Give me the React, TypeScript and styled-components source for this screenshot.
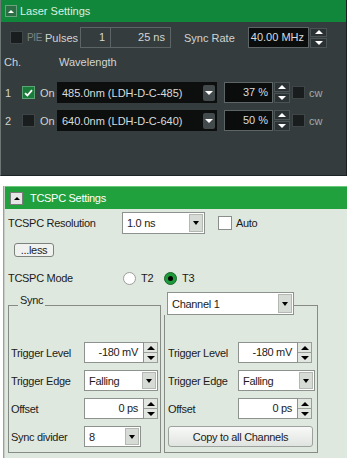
import React from "react";
import styled, { createGlobalStyle } from "styled-components";

const GlobalStyle = createGlobalStyle`
  html, body { margin: 0; padding: 0; background: #ffffff; }
  body { font-family: "Liberation Sans", Arial, sans-serif; font-size: 11px; }
  * { box-sizing: border-box; }
`;

const Page = styled.div`
  width: 347px;
  height: 458px;
  overflow: hidden;
  display: flex;
  flex-direction: column;
`;

/* small triangle glyph used by arrows and spinners */
const Tri = styled.span<{ $dir: "up" | "down"; $color: string; $w?: number; $h?: number }>`
  display: block;
  width: 0;
  height: 0;
  border-left: ${p => p.$w ?? 4}px solid transparent;
  border-right: ${p => p.$w ?? 4}px solid transparent;
  ${p =>
    p.$dir === "up"
      ? `border-bottom: ${p.$h ?? 4}px solid ${p.$color};`
      : `border-top: ${p.$h ?? 4}px solid ${p.$color};`}
`;

/* ---------- Laser settings (dark panel) ---------- */
const LaserPanel = styled.section`
  height: 176px;
  background: #353c3d;
  border-left: 1px solid #6e7676;
  border-right: 1px solid #1b2021;
  border-bottom: 1px solid #1e2324;
  color: #d2d6d6;
`;

const DarkHeader = styled.div`
  height: 22px;
  display: flex;
  align-items: center;
  padding-left: 4px;
  background: #10873a;
`;

const DarkCollapse = styled.div`
  width: 12px;
  height: 12px;
  display: flex;
  align-items: center;
  justify-content: center;
  background: #2c6f45;
  border: 1px solid #6aa47f;
`;

const DarkTitle = styled.span`
  margin-left: 3px;
  color: #dcefe0;
`;

const DarkRow = styled.div<{ $top: number; $left: number }>`
  display: flex;
  align-items: center;
  height: 21px;
  margin-top: ${p => p.$top}px;
  padding-left: ${p => p.$left}px;
`;

const DarkLabel = styled.span<{ $w?: number; $ml?: number; $tone?: "dim" | "soft" }>`
  flex: none;
  width: ${p => (p.$w ? `${p.$w}px` : "auto")};
  margin-left: ${p => p.$ml ?? 0}px;
  color: ${p => (p.$tone === "dim" ? "#7b8383" : p.$tone === "soft" ? "#a3aaaa" : "#d0d4d4")};
  font-size: ${p => (p.$tone === "dim" ? "10px" : "11px")};
  letter-spacing: ${p => (p.$tone === "dim" ? "-0.4px" : "0")};
  white-space: nowrap;
`;

const DarkCheck = styled.span<{ $checked?: boolean; $ml?: number }>`
  flex: none;
  width: 13px;
  height: 13px;
  margin-left: ${p => p.$ml ?? 0}px;
  display: flex;
  align-items: center;
  justify-content: center;
  background: ${p => (p.$checked ? "#1b7b3b" : "#191d1e")};
  border: 1px solid ${p => (p.$checked ? "#5aa574" : "#3f4647")};
`;

const FrameBox = styled.div<{ $w: number; $ml?: number }>`
  flex: none;
  width: ${p => p.$w}px;
  height: 21px;
  margin-left: ${p => p.$ml ?? 0}px;
  border: 1px solid #5c6465;
  text-align: right;
  padding-right: 5px;
  line-height: 19px;
`;

const BlackInput = styled.div<{ $w: number; $ml?: number }>`
  flex: none;
  width: ${p => p.$w}px;
  height: 21px;
  margin-left: ${p => p.$ml ?? 0}px;
  background: #0b0d0d;
  border: 1px solid #5d6566;
  color: #d8dcdc;
  text-align: right;
  padding-right: 4px;
  line-height: 19px;
`;

const DarkSpin = styled.div<{ $w: number; $h: number }>`
  flex: none;
  width: ${p => p.$w}px;
  height: ${p => p.$h}px;
  margin-left: 1px;
  display: flex;
  flex-direction: column;
  gap: 1px;
`;

const DarkSpinBtn = styled.div`
  flex: 1;
  display: flex;
  align-items: center;
  justify-content: center;
  background: #2b3234;
  border: 1px solid #4b5355;
`;

const ColHead = styled.div`
  display: flex;
  align-items: center;
  height: 14px;
  margin-top: 7px;
  padding-left: 3px;
  color: #cdd1d1;
`;

const ChannelList = styled.div`
  display: flex;
  flex-direction: column;
  gap: 7px;
  margin-top: 13px;
`;

const DarkSelect = styled.div<{ $w: number }>`
  flex: none;
  width: ${p => p.$w}px;
  height: 21px;
  display: flex;
  align-items: center;
  justify-content: space-between;
  padding: 0 2px 0 5px;
  background: #0d0f0f;
  color: #d8dcdc;
`;

const DarkDrop = styled.div`
  width: 12px;
  height: 16px;
  display: flex;
  align-items: center;
  justify-content: center;
  background: #434a4c;
  border-radius: 2px;
`;

/* ---------- TCSPC settings (light panel) ---------- */
const TcspcPanel = styled.section`
  flex: 1;
  margin-top: 10px;
  margin-left: 3px;
  background: #dfe8de;
  border-left: 1px solid #9aa19a;
  box-shadow: inset 1px 0 0 #c6cec6;
  color: #1b1b1b;
  letter-spacing: -0.3px;
`;

const LightHeader = styled.div`
  margin-left: 1px;
  height: 23px;
  display: flex;
  align-items: center;
  padding-left: 5px;
  background: #21a13e;
  border-top: 1px solid #6bc779;
`;

const LightCollapse = styled.div`
  width: 13px;
  height: 13px;
  display: flex;
  align-items: center;
  justify-content: center;
  background: #e6e6e6;
  border: 1px solid #7c7c7c;
`;

const LightTitle = styled.span`
  margin-left: 7px;
  color: #ffffff;
`;

const Body = styled.div`
  padding-left: 4px;
`;

const LightRow = styled.div<{ $top: number; $h: number }>`
  display: flex;
  align-items: center;
  height: ${p => p.$h}px;
  margin-top: ${p => p.$top}px;
`;

const RowLabel = styled.span<{ $w?: number; $ml?: number }>`
  flex: none;
  width: ${p => (p.$w ? `${p.$w}px` : "auto")};
  margin-left: ${p => p.$ml ?? 0}px;
  white-space: nowrap;
`;

const LightSelect = styled.div<{ $w: number; $h?: number; $ml?: number }>`
  flex: none;
  width: ${p => p.$w}px;
  height: ${p => p.$h ?? 21}px;
  margin-left: ${p => p.$ml ?? 0}px;
  display: flex;
  align-items: center;
  justify-content: space-between;
  padding: 0 1px 0 4px;
  background: #ffffff;
  border: 1px solid #8e928e;
`;

const LightDrop = styled.div`
  width: 14px;
  height: calc(100% - 2px);
  display: flex;
  align-items: center;
  justify-content: center;
  background: #d6dcd5;
  border: 1px solid #b3b8b2;
`;

const WhiteCheck = styled.span`
  flex: none;
  width: 14px;
  height: 14px;
  margin-left: 13px;
  background: #ffffff;
  border: 1px solid #8a8e8a;
`;

const LessButton = styled.button`
  display: block;
  margin: 9px 0 0 6px;
  width: 40px;
  height: 14px;
  padding: 0;
  font: inherit;
  line-height: 12px;
  letter-spacing: -0.3px;
  color: #1b1b1b;
  background: #f0f2f0;
  border: 1px solid #7e827e;
  border-radius: 3px;
`;

const Radio = styled.span<{ $on?: boolean; $ml?: number }>`
  flex: none;
  width: 13px;
  height: 13px;
  margin-left: ${p => p.$ml ?? 0}px;
  border-radius: 50%;
  display: flex;
  align-items: center;
  justify-content: center;
  background: ${p => (p.$on ? "#1f9a3b" : "#ffffff")};
  border: 1px solid ${p => (p.$on ? "#17662a" : "#9a9e9a")};
  &::after {
    content: "";
    display: ${p => (p.$on ? "block" : "none")};
    width: 5px;
    height: 5px;
    border-radius: 50%;
    background: #000000;
  }
`;

const Groups = styled.div`
  display: flex;
  gap: 3px;
  margin-top: 6px;
`;

const Group = styled.div<{ $w: number }>`
  width: ${p => p.$w}px;
  display: flex;
  flex-direction: column;
`;

const GroupHead = styled.div`
  height: 23px;
  display: flex;
  align-items: flex-start;
`;

const HeadLine = styled.div<{ $left?: boolean; $right?: boolean; $w?: number }>`
  align-self: stretch;
  margin-top: 13px;
  flex: ${p => (p.$w ? `0 0 ${p.$w}px` : "1")};
  border-top: 1px solid #868b86;
  border-left: ${p => (p.$left ? "1px solid #868b86" : "none")};
  border-right: ${p => (p.$right ? "1px solid #868b86" : "none")};
`;

const Legend = styled.span`
  margin-top: 2px;
  padding: 0 2px;
  line-height: 13px;
`;

const GroupBody = styled.div<{ $pl: number }>`
  display: grid;
  grid-template-columns: 1fr auto;
  grid-auto-rows: 21px;
  row-gap: 7px;
  align-items: center;
  padding: 27px 2px 5px ${p => p.$pl}px;
  border: 1px solid #868b86;
  border-top: none;
`;

const Field = styled.div`
  display: flex;
  height: 21px;
`;

const WhiteInput = styled.div<{ $w: number }>`
  width: ${p => p.$w}px;
  height: 21px;
  background: #ffffff;
  border: 1px solid #8e928e;
  text-align: right;
  padding-right: 5px;
  line-height: 19px;
`;

const LightSpin = styled.div`
  width: 14px;
  display: flex;
  flex-direction: column;
  background: #e2e6e1;
  border: 1px solid #9a9e9a;
  border-left: none;
`;

const LightSpinBtn = styled.div<{ $top?: boolean }>`
  flex: 1;
  display: flex;
  align-items: center;
  justify-content: center;
  border-bottom: ${p => (p.$top ? "1px solid #9a9e9a" : "none")};
`;

const CopyButton = styled.button`
  grid-column: 1 / -1;
  height: 21px;
  margin-right: 2px;
  padding: 0;
  font: inherit;
  letter-spacing: -0.3px;
  color: #1b1b1b;
  background: linear-gradient(#f8f9f8, #e0e4e0);
  border: 1px solid #9ea29e;
  border-radius: 3px;
`;

const Check = () => (
  <svg width="9" height="8" viewBox="0 0 9 8">
    <path d="M1 4.2 L3.4 6.5 L8 1.2" fill="none" stroke="#ffffff" strokeWidth="1.8" />
  </svg>
);

const DarkSpinner = ({ w, h }: { w: number; h: number }) => (
  <DarkSpin $w={w} $h={h}>
    <DarkSpinBtn><Tri $dir="up" $color="#ffffff" $w={4} $h={4} /></DarkSpinBtn>
    <DarkSpinBtn><Tri $dir="down" $color="#ffffff" $w={4} $h={4} /></DarkSpinBtn>
  </DarkSpin>
);

const SpinField = ({ value }: { value: string }) => (
  <Field>
    <WhiteInput $w={60}>{value}</WhiteInput>
    <LightSpin>
      <LightSpinBtn $top><Tri $dir="up" $color="#000" $w={4} $h={4} /></LightSpinBtn>
      <LightSpinBtn><Tri $dir="down" $color="#000" $w={4} $h={4} /></LightSpinBtn>
    </LightSpin>
  </Field>
);

const Select = ({ value, w, h, ml }: { value: string; w: number; h?: number; ml?: number }) => (
  <LightSelect $w={w} $h={h} $ml={ml}>
    <span>{value}</span>
    <LightDrop><Tri $dir="down" $color="#000" $w={3.5} $h={4} /></LightDrop>
  </LightSelect>
);

const channels = [
  { ch: "1", on: true, name: "485.0nm (LDH-D-C-485)", pct: "37 %" },
  { ch: "2", on: false, name: "640.0nm (LDH-D-C-640)", pct: "50 %" },
];

export default function App() {
  return (
    <>
      <GlobalStyle />
      <Page>
        <LaserPanel>
          <DarkHeader>
            <DarkCollapse><Tri $dir="up" $color="#ffffff" $w={3} $h={3} /></DarkCollapse>
            <DarkTitle>Laser Settings</DarkTitle>
          </DarkHeader>

          <DarkRow $top={5} $left={9}>
            <DarkCheck />
            <DarkLabel $w={18} $ml={4} $tone="dim">PIE</DarkLabel>
            <DarkLabel $w={35}>Pulses</DarkLabel>
            <FrameBox $w={31}>1</FrameBox>
            <FrameBox $w={61} $ml={-1}>25 ns</FrameBox>
            <DarkLabel $w={64} $ml={13}>Sync Rate</DarkLabel>
            <BlackInput $w={61}>40.00 MHz</BlackInput>
            <DarkSpinner w={17} h={20} />
          </DarkRow>

          <ColHead>
            <DarkLabel $w={55}>Ch.</DarkLabel>
            <DarkLabel>Wavelength</DarkLabel>
          </ColHead>

          <ChannelList>
            {channels.map(c => (
              <DarkRow key={c.ch} $top={0} $left={4}>
                <DarkLabel $w={17}>{c.ch}</DarkLabel>
                <DarkCheck $checked={c.on}>{c.on && <Check />}</DarkCheck>
                <DarkLabel $w={17} $ml={5}>On</DarkLabel>
                <DarkSelect $w={160}>
                  <span>{c.name}</span>
                  <DarkDrop><Tri $dir="down" $color="#ffffff" $w={4} $h={4} /></DarkDrop>
                </DarkSelect>
                <BlackInput $w={49} $ml={7}>{c.pct}</BlackInput>
                <DarkSpinner w={16} h={21} />
                <DarkCheck $ml={2} />
                <DarkLabel $ml={4} $tone="soft">cw</DarkLabel>
              </DarkRow>
            ))}
          </ChannelList>
        </LaserPanel>

        <TcspcPanel>
          <LightHeader>
            <LightCollapse><Tri $dir="up" $color="#000000" $w={3} $h={3} /></LightCollapse>
            <LightTitle>TCSPC Settings</LightTitle>
          </LightHeader>

          <Body>
            <LightRow $top={3} $h={22}>
              <RowLabel $w={114}>TCSPC Resolution</RowLabel>
              <Select value="1.0 ns" w={83} h={22} />
              <WhiteCheck />
              <RowLabel $ml={4}>Auto</RowLabel>
            </LightRow>

            <LessButton>...less</LessButton>

            <LightRow $top={13} $h={16}>
              <RowLabel $w={115}>TCSPC Mode</RowLabel>
              <Radio />
              <RowLabel $w={13} $ml={5}>T2</RowLabel>
              <Radio $on $ml={10} />
              <RowLabel $ml={5}>T3</RowLabel>
            </LightRow>

            <Groups>
              <Group $w={153}>
                <GroupHead>
                  <HeadLine $left $w={10} />
                  <Legend>Sync</Legend>
                  <HeadLine $right />
                </GroupHead>
                <GroupBody $pl={2}>
                  <RowLabel>Trigger Level</RowLabel>
                  <SpinField value="-180 mV" />
                  <RowLabel>Trigger Edge</RowLabel>
                  <Select value="Falling" w={74} />
                  <RowLabel>Offset</RowLabel>
                  <SpinField value="0 ps" />
                  <RowLabel>Sync divider</RowLabel>
                  <Select value="8" w={57} />
                </GroupBody>
              </Group>

              <Group $w={154}>
                <GroupHead>
                  <Select value="Channel 1" w={127} h={23} ml={3} />
                  <HeadLine $right />
                </GroupHead>
                <GroupBody $pl={3}>
                  <RowLabel>Trigger Level</RowLabel>
                  <SpinField value="-180 mV" />
                  <RowLabel>Trigger Edge</RowLabel>
                  <Select value="Falling" w={77} />
                  <RowLabel>Offset</RowLabel>
                  <SpinField value="0 ps" />
                  <CopyButton>Copy to all Channels</CopyButton>
                </GroupBody>
              </Group>
            </Groups>
          </Body>
        </TcspcPanel>
      </Page>
    </>
  );
}
